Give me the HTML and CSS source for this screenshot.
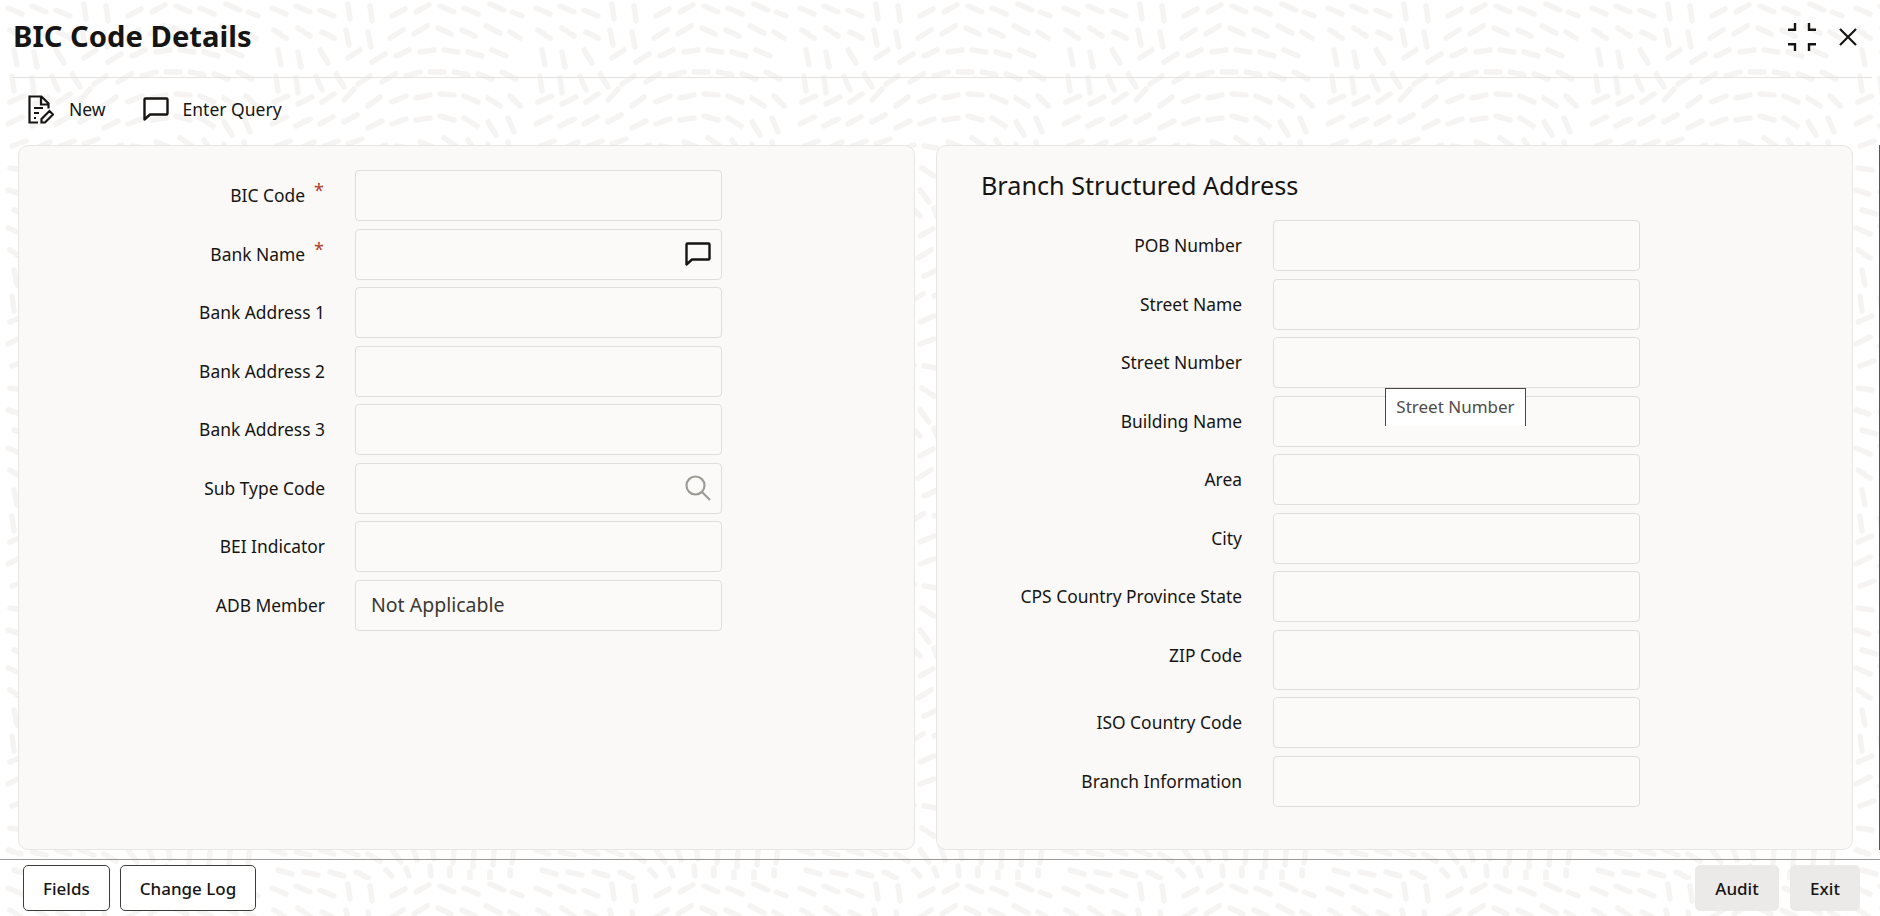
FILE: index.html
```html
<!DOCTYPE html>
<html lang="en">
<head>
<meta charset="utf-8">
<title>BIC Code Details</title>
<link rel="stylesheet" href="styles.css">
</head>
<body>
<div class="window">
  <header class="titlebar">
    <h1 class="title">BIC Code Details</h1>
    <div class="window-actions">
      <svg class="ic-collapse" viewBox="0 0 28 28" width="28" height="28"><path d="M0 6.8h7V0M21 0v6.8h7M0 21.2h7V28M28 21.2h-7V28" fill="none" stroke="#161513" stroke-width="2.4"/></svg>
      <svg class="ic-close" viewBox="0 0 18 18" width="18" height="18"><path d="M1 1l16 16M17 1L1 17" fill="none" stroke="#161513" stroke-width="2.2"/></svg>
    </div>
  </header>
  <nav class="toolbar">
    <a class="tool tool-new">
      <svg viewBox="0 0 26 29" width="26" height="29"><path d="M10 27.5H1.5V1.5h12l7 7v5M13 1.5v8h7.500M6 13h9M6 18h5M6 23h2M13.500 27.500v-3.500l8-8 3.500 3.500-8 8z" fill="none" stroke="#161513" stroke-width="2.200"/></svg>
      <span>New</span>
    </a>
    <a class="tool tool-query">
      <svg viewBox="0 0 26 24" width="26" height="24"><path d="M1.500 22.500V2.500q0-1 1-1h21q1 0 1 1v14q0 1-1 1H7z" fill="none" stroke="#161513" stroke-width="2.400" stroke-linejoin="round"/></svg>
      <span>Enter Query</span>
    </a>
  </nav>
  <main class="panels">
    <section class="panel panel-left">
      <div class="form">
        <label class="lab lab-req">BIC Code<i class="req">*</i></label><div class="inp"></div>
        <label class="lab lab-req">Bank Name<i class="req">*</i></label>
        <div class="inp">
          <svg class="inp-ic" viewBox="0 0 26 24" width="26" height="24"><path d="M1.500 22.500V2.500q0-1 1-1h21q1 0 1 1v14q0 1-1 1H7z" fill="none" stroke="#161513" stroke-width="2.400" stroke-linejoin="round"/></svg>
        </div>
        <label class="lab">Bank Address 1</label><div class="inp"></div>
        <label class="lab">Bank Address 2</label><div class="inp"></div>
        <label class="lab">Bank Address 3</label><div class="inp"></div>
        <label class="lab">Sub Type Code</label>
        <div class="inp">
          <svg class="inp-ic" viewBox="0 0 26 26" width="26" height="26"><circle cx="10.500" cy="10.500" r="9" fill="none" stroke="#9e9a96" stroke-width="2.200"/><path d="M17 17l8 8" fill="none" stroke="#9e9a96" stroke-width="2.200"/></svg>
        </div>
        <label class="lab">BEI Indicator</label><div class="inp"></div>
        <label class="lab">ADB Member</label><div class="inp inp-val">Not Applicable</div>
      </div>
    </section>
    <section class="panel panel-right">
      <h2 class="sec-title">Branch Structured Address</h2>
      <div class="form">
        <label class="lab">POB Number</label><div class="inp"></div>
        <label class="lab">Street Name</label><div class="inp"></div>
        <label class="lab">Street Number</label><div class="inp"></div>
        <label class="lab">Building Name</label><div class="inp"><span class="tooltip">Street Number</span></div>
        <label class="lab">Area</label><div class="inp"></div>
        <label class="lab">City</label><div class="inp"></div>
        <label class="lab">CPS Country Province State</label><div class="inp"></div>
        <label class="lab">ZIP Code</label><div class="inp inp-tall"></div>
        <label class="lab">ISO Country Code</label><div class="inp"></div>
        <label class="lab">Branch Information</label><div class="inp"></div>
      </div>
    </section>
  </main>
  <footer class="footer">
    <div class="btns">
      <button class="btn">Fields</button>
      <button class="btn">Change Log</button>
    </div>
    <div class="btns btns-right">
      <button class="btn btn-grey btn-audit">Audit</button>
      <button class="btn btn-grey btn-exit">Exit</button>
    </div>
  </footer>
</div>
</body>
</html>
```
FILE: styles.css
```css
* { box-sizing: border-box; }
html, body { margin: 0; height: 100%; }
body {
  font-family: "Noto Sans", "Open Sans", sans-serif;
  color: #161513;
  overflow: hidden;
  background-color: #fff;
  background-image: url("data:image/svg+xml,%3Csvg xmlns='http://www.w3.org/2000/svg' width='264' height='220'%3E%3Cg stroke='%23f5f4f2' stroke-width='5.500' stroke-linecap='round' fill='none'%3E%3Cpath d='M8 8l14 6M32 6l14 6M56 10l14 6M84 4l2 15M106 6l2 15M128 16l13-7M152 12l13-7M176 6l14 6M200 8l14 6M226 4l14 6M248 12l10 4M10 30l12 8M34 28l12 8M58 32l12 6M82 30l3 15M104 32l3 15M126 38l13-8M150 34l13-8M174 28l13 6M198 30l13 6M222 26l14 7M246 32l10 6M14 50l3 15M34 52l3 15M56 50l8 13M84 58l12-8M108 62l13-8M132 56l13-6M156 52l14-2M180 50l14 2M204 52l14 4M228 50l14 6M12 76l2 15M32 78l2 15M52 76l6 14M72 74l8 13M94 84l12-8M118 82l13-8M142 76l14-4M166 72l14 0M190 72l14 3M214 74l14 5M238 72l14 7M10 102l14-6M34 104l14-7M58 102l12-8M80 100l10-11M104 106l12-9M128 102l14-6M152 98l14-3M176 94l14 1M200 96l14 6M224 98l12 8M246 96l10 10M8 124l14-7M32 126l14-7M56 124l13-7M80 122l13-7M104 128l14-7M128 124l14-5M152 120l14-2M176 116l14 4M200 118l13 8M224 122l8 13M244 118l6 14M12 146l14-5M36 148l14-6M60 146l14-5M84 144l14-5M108 150l14-5M132 146l13 2M156 142l13 5M180 138l12 8M204 140l8 13M224 144l3 15M244 142l3 15M10 168l14 2M34 168l14 3M58 168l14 2M82 166l14 2M106 170l14 4M130 168l12 8M154 164l10 11M176 160l8 13M196 164l3 15M216 166l2 15M238 166l-1 15M256 164l0 14M8 190l13 4M32 192l14 3M56 190l14 4M80 190l14 5M104 194l12 7M128 190l9 12M148 186l5 14M168 184l2 15M190 188l-1 15M210 192l-1 15M230 190l-1 15M250 188l-2 15M14 210l14 4M40 212l14 3M66 212l14 4M92 212l12 6M122 210l6 6M142 208l3 8M166 206l1 10M186 208l0 8M206 212l0 6M226 212l0 6M246 210l0 6'/%3E%3C/g%3E%3C/svg%3E");
}
.window { width: 1880px; height: 916px; display: flex; flex-direction: column; }

.titlebar {
  height: 78px; margin: 0 8px 0 12px; padding: 0 0 4px 1px;
  display: flex; align-items: center; justify-content: space-between;
  border-bottom: 1px solid #e4e2df;
}
.title { margin: 0; font-size: 29.200px; font-weight: 700; line-height: 1; }
.window-actions { display: flex; align-items: center; gap: 23px; margin-right: 15px; }

.toolbar { height: 67px; display: flex; align-items: center; padding: 0 0 5px 28px; gap: 37px; }
.tool { display: flex; align-items: center; font-size: 17.500px; }
.tool-new { gap: 15px; }
.tool-query { gap: 14px; }

.panels {
  display: flex; gap: 21px; height: 705px;
  margin-left: 18px; padding-right: 26px;
  border-right: 1px solid #555;
}
.panel { background: #faf9f7; border: 1px solid #e8e6e3; border-radius: 10px; }
.panel-left { width: 897px; padding-top: 24px; }
.panel-right { flex: 1; padding-top: 21px; }
.panel-right .lab { padding-right: 1px; }
.sec-title { margin: 0 0 17px 44px; font-size: 25.200px; font-weight: 400; line-height: 36px; }

.form {
  display: grid;
  grid-template-columns: 306px 367px;
  column-gap: 30px;
  row-gap: 7.500px;
  align-items: start;
}
.lab { display: block; position: relative; text-align: right; font-size: 17.400px; line-height: 51px; font-weight: 400; }
.lab-req { padding-right: 20px; }
.req {
  position: absolute; right: 11px; top: -5px; width: 0;
  font-style: normal; font-weight: 400; font-size: 18px; color: #b3402c;
}
.inp {
  height: 51px; position: relative;
  border: 1px solid #e0dedb; border-radius: 4px;
  display: flex; align-items: center; justify-content: flex-end; padding-right: 10px;
  background: #fbfaf8;
}
.inp-val { justify-content: flex-start; padding: 0 0 2px 15px; font-size: 19.500px; color: #3a3834; }
.inp-tall { height: 60px; }

.tooltip {
  position: absolute; left: 111px; top: -9px;
  width: 141px; height: 38px;
  border: 1px solid #4a4846; border-bottom: 0;
  background: #fff; color: #4f4c49;
  font-size: 17px; line-height: 36px; text-align: center;
  white-space: nowrap;
}

.footer {
  flex: 1; margin-top: 9px; padding: 5px 20px 0 23px;
  border-top: 1px solid #9b9996;
  display: flex; justify-content: space-between; align-items: flex-start;
}
.btns { display: flex; gap: 10px; }
.btns-right { gap: 11px; }
.btn {
  height: 46px; padding: 0 19px;
  font: 500 17px "Noto Sans", "Open Sans", sans-serif; color: #161513;
  border: 1px solid #3f3d3a; border-radius: 5px; background: #fff;
}
.btn-grey { background: #ebeae8; border-color: #ebeae8; }
.btn-audit { width: 84px; padding: 0; }
.btn-exit { width: 70px; padding: 0; }
```
